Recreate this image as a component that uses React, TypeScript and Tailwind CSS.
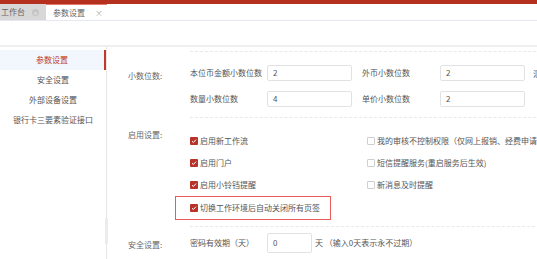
import React from 'react';

const font = { fontFamily: '"Noto Sans CJK SC", "Noto Sans", sans-serif' };

const Check = ({ on }: { on?: boolean }) =>
  on ? (
    <span className="w-[8px] h-[8px] shrink-0 rounded-[1px] bg-[#b8322a] flex items-center justify-center">
      <svg width="6" height="6" viewBox="0 0 6 6">
        <path d="M1 3.2 L2.4 4.5 L5 1.6" stroke="#fff" strokeWidth="1" fill="none" />
      </svg>
    </span>
  ) : (
    <span className="w-[8px] h-[8px] shrink-0 rounded-[1px] border border-[#cfcfcf] bg-white" />
  );

const Field = ({ label, value, lw = 'w-[77px]' }: { label: string; value: string; lw?: string }) => (
  <div className="flex items-center shrink-0">
    <span className={`${lw} shrink-0 text-[8px] text-[#555] whitespace-nowrap`}>{label}</span>
    <div className="w-[85px] h-[16px] shrink-0 border border-[#e2e2e2] rounded-[2px] pl-[5px] flex items-center text-[8px] text-[#555]">{value}</div>
  </div>
);

const CheckRow = ({ on, text }: { on?: boolean; text: string }) => (
  <div className="h-[14px] flex items-center gap-[2px] text-[8px] text-[#555] whitespace-nowrap">
    <Check on={on} />
    <span>{text}</span>
  </div>
);

export default function App() {
  const menu = ['参数设置', '安全设置', '外部设备设置', '银行卡三要素验证接口'];
  return (
    <div className="w-[537px] h-[259px] overflow-hidden bg-white relative" style={font}>
      {/* top bar */}
      <div className="h-[4px] bg-[#b5301f]" />
      <div className="h-[17px] flex border-b border-[#e6e8ef]">
        <div className="w-[46px] bg-[#d8d8d8] flex items-center text-[8px] text-[#666] pl-[1px]">
          <span>工作台</span>
          <span className="ml-[7px] w-[7px] h-[7px] rounded-full bg-[#c4c4c4] text-white text-[5px] leading-none flex items-center justify-center">×</span>
        </div>
        <div className="w-[61px] border-t border-[#e07a6c] flex items-center text-[8px] text-[#666] pl-[7px]">
          <span>参数设置</span>
          <span className="ml-[10px] text-[#aaa] text-[8px]">×</span>
        </div>
      </div>
      <div className="h-[24px]" />
      <div className="h-[2px] bg-[#efefef]" />

      <div className="flex h-[212px]">
        {/* sidebar */}
        <div className="w-[107px] shrink-0 border-r border-[#e6e6e6] pt-[3px] relative">
          {menu.map((m, i) => (
            <div
              key={m}
              className={`h-[20px] flex items-center justify-center text-[8px] whitespace-nowrap ${
                i === 0 ? 'bg-[#f1f7fc] text-[#c0392b] border-r-2 border-[#c0392b]' : 'text-[#555]'
              }`}
            >
              {m}
            </div>
          ))}
          <div className="absolute right-[-2px] top-[171px] w-[3px] h-[26px] bg-[#ececec]" />
        </div>

        {/* content */}
        <div className="flex-1 min-w-0 overflow-hidden pl-[21px]">
          {/* section 1 */}
          <div className="flex pt-[4px]">
            <div className="w-[62px] shrink-0 pt-[19px] text-[8px] text-[#666]">小数位数:</div>
            <div className="flex-1 border-t border-b border-dashed border-[#e9e9e9] pt-[13px] pb-[10px] flex flex-col gap-[10px]">
              <div className="flex gap-[10px]">
                <Field label="本位币金额小数位数" value="2" />
                <Field label="外币小数位数" value="2" lw="w-[78px]" />
                <span className="text-[8px] text-[#555] whitespace-nowrap pt-[3px] ml-[-2px]">汇率小数位数</span>
              </div>
              <div className="flex gap-[10px]">
                <Field label="数量小数位数" value="4" />
                <Field label="单价小数位数" value="2" lw="w-[78px]" />
              </div>
            </div>
          </div>

          {/* section 2 */}
          <div className="flex">
            <div className="w-[62px] shrink-0 pt-[11px] text-[8px] text-[#666]">启用设置:</div>
            <div className="flex-1 border-b border-dashed border-[#e9e9e9] pt-[16px] pb-[6px]">
              <div className="flex">
                <div className="w-[177px] shrink-0 flex flex-col gap-[8px]">
                  <CheckRow on text="启用新工作流" />
                  <CheckRow on text="启用门户" />
                  <CheckRow on text="启用小铃铛提醒" />
                </div>
                <div className="flex flex-col gap-[8px]">
                  <CheckRow text="我的审核不控制权限（仅网上报销、经费申请、" />
                  <CheckRow text="短信提醒服务(重启服务后生效)" />
                  <CheckRow text="新消息及时提醒" />
                </div>
              </div>
              <div className="mt-[4px] -ml-[15px] w-[156px] h-[24px] border border-[#e85a5a] flex items-center pl-[14px]">
                <CheckRow on text="切换工作环境后自动关闭所有页签" />
              </div>
            </div>
          </div>

          {/* section 3 */}
          <div className="flex">
            <div className="w-[62px] shrink-0 pt-[12px] text-[8px] text-[#666]">安全设置:</div>
            <div className="flex-1 pt-[6px] flex items-center text-[8px] text-[#555] whitespace-nowrap">
              <span className="w-[77px] shrink-0">密码有效期（天）</span>
              <div className="w-[45px] h-[20px] shrink-0 border border-[#e2e2e2] rounded-[2px] pl-[5px] flex items-center">0</div>
              <span className="ml-[3px]">天 （输入0天表示永不过期）</span>
            </div>
          </div>
        </div>
      </div>
    </div>
  );
}
